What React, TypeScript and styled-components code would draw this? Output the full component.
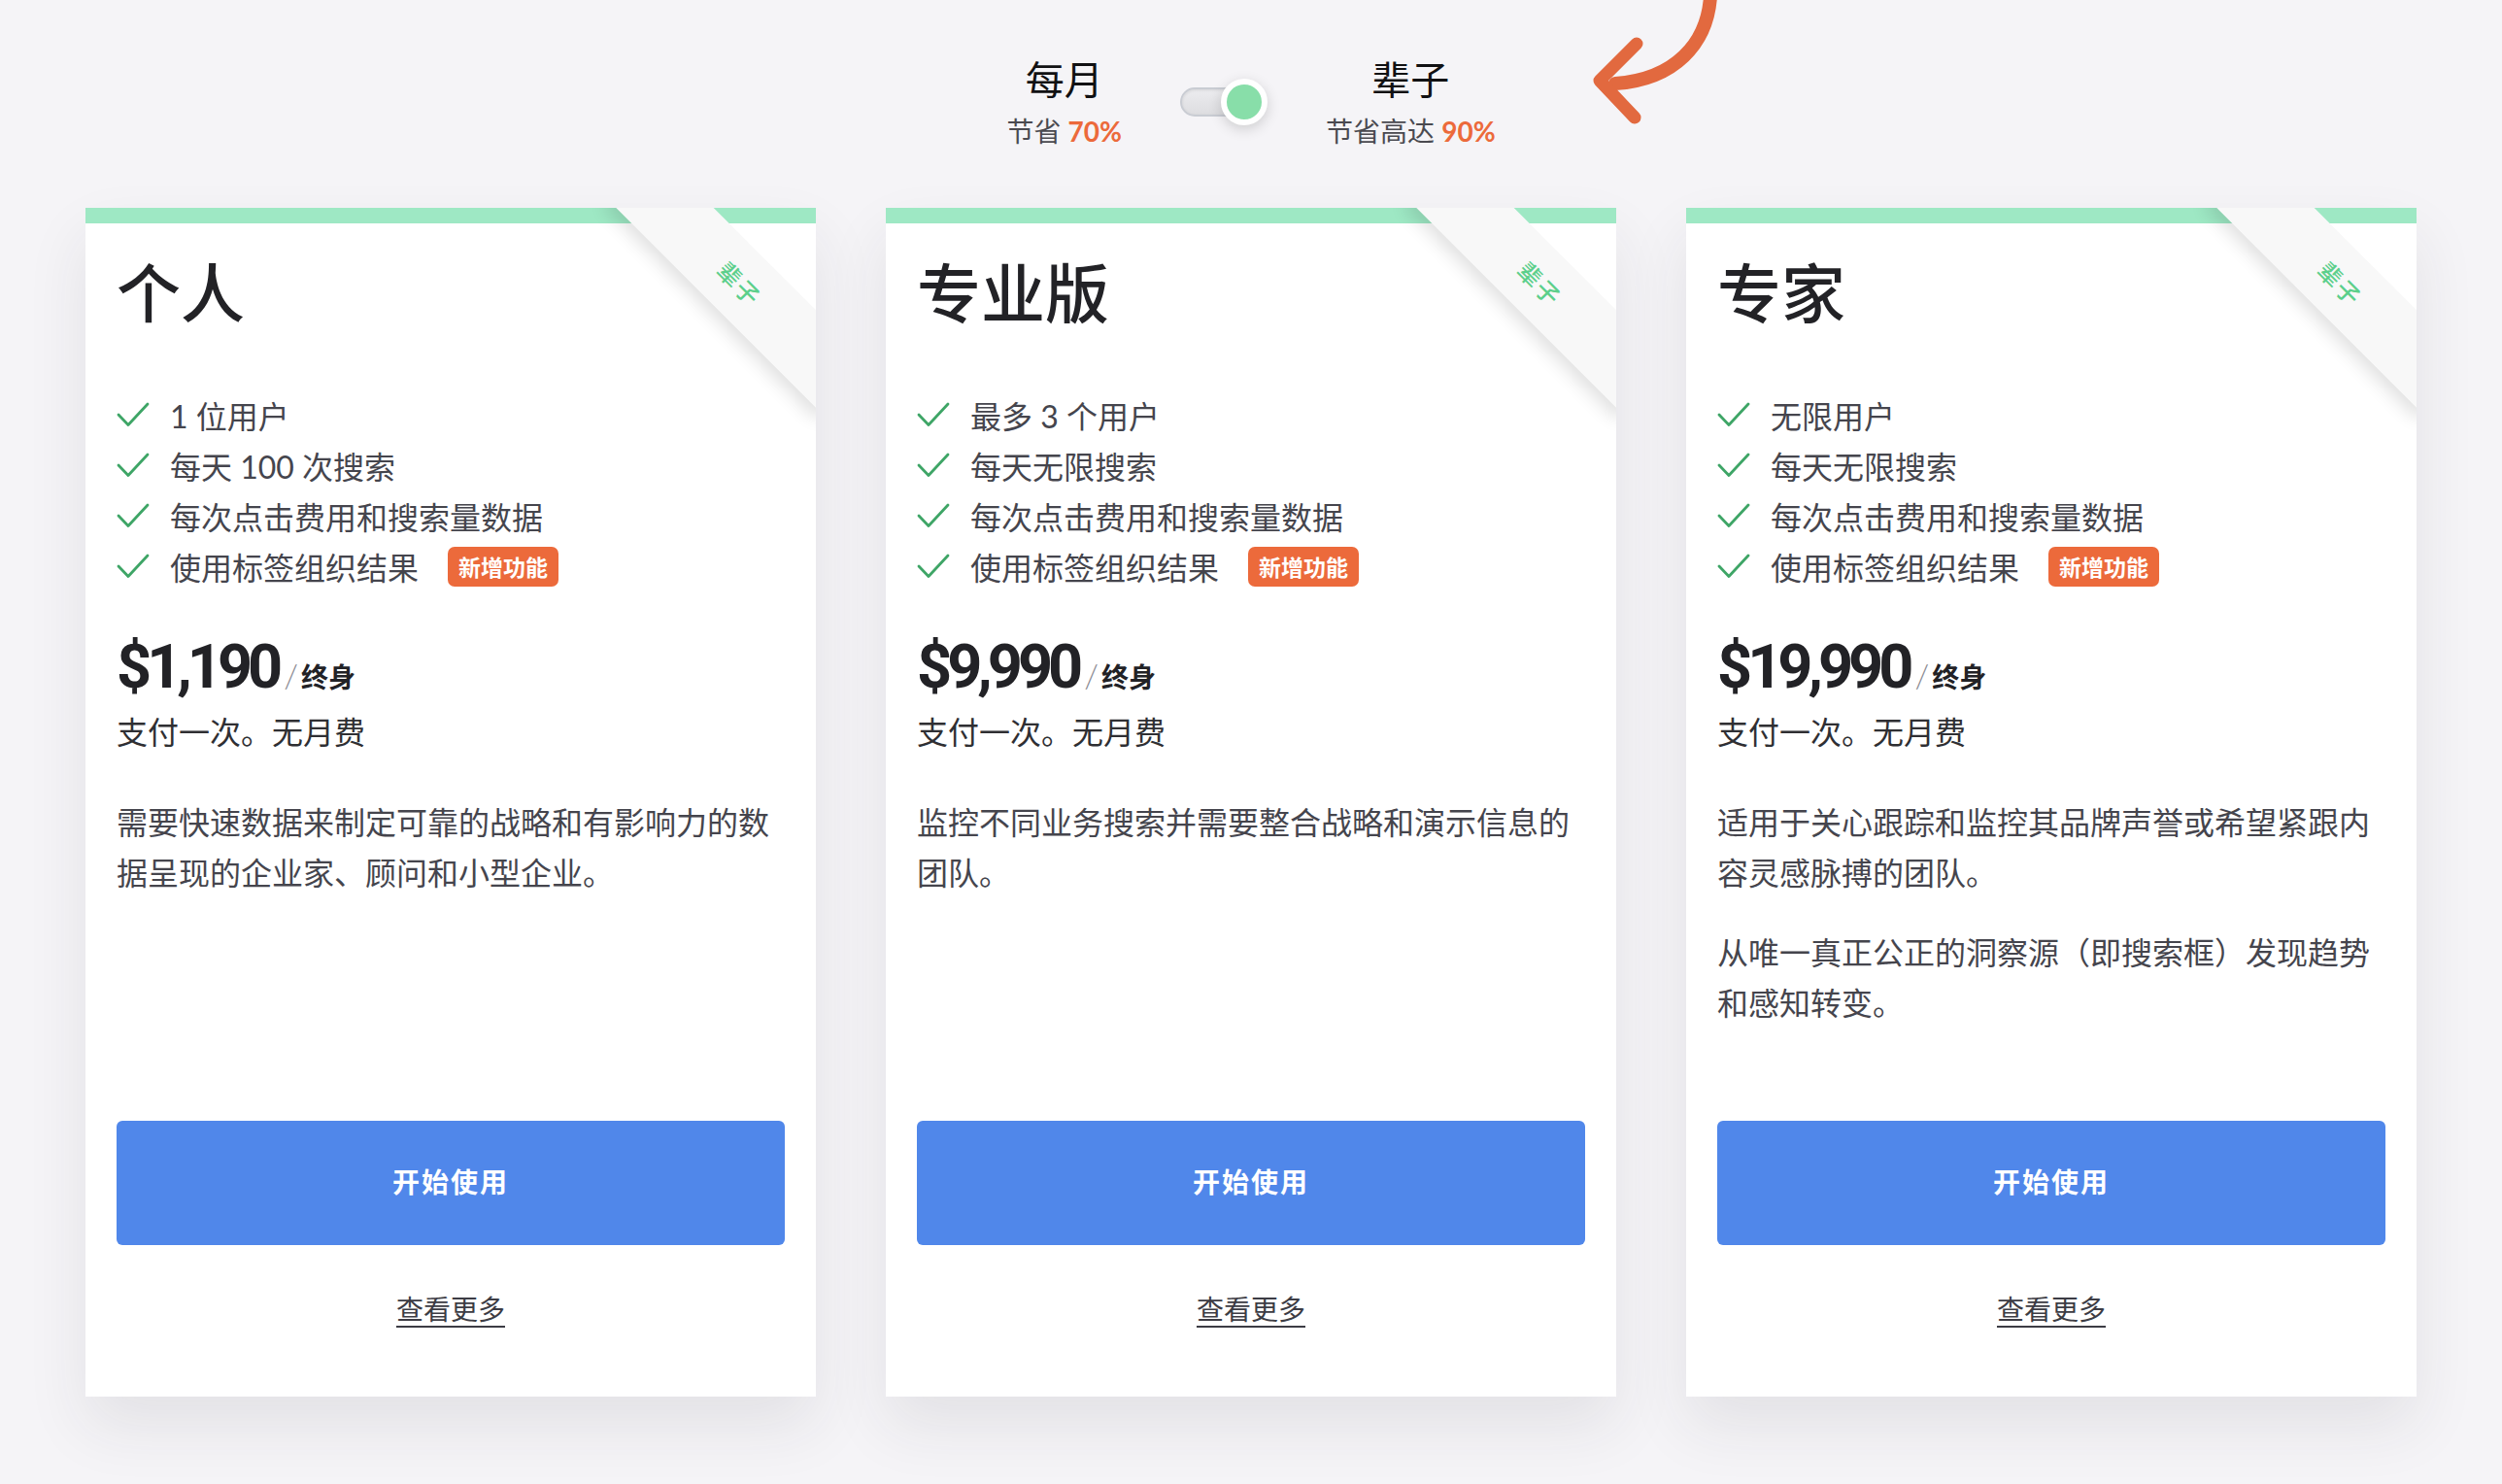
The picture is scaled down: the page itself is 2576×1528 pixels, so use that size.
import styled, { createGlobalStyle } from 'styled-components';

const GlobalStyle = createGlobalStyle`
  html, body {
    margin: 0;
    padding: 0;
    background: #f5f4f7;
  }
  body {
    font-family: Lato, 'Noto Sans CJK SC', sans-serif;
    color: #2a2a2e;
  }
  * {
    box-sizing: border-box;
  }
`;

const Page = styled.div`
  position: relative;
  min-height: 1528px;
  padding: 56px 0 90px;
`;

const Header = styled.div`
  display: flex;
  justify-content: center;
  align-items: center;
  gap: 60px;
`;

const PlanLabel = styled.div`
  display: flex;
  flex-direction: column;
  align-items: center;
`;

const LabelTitle = styled.div`
  font-size: 40px;
  line-height: 52px;
  font-weight: 400;
  color: #111113;
`;

const LabelSub = styled.div`
  margin-top: 9px;
  font-size: 28px;
  line-height: 36px;
  color: #4a4a50;
  b {
    color: #ec6a3b;
    font-weight: 700;
  }
`;

const Toggle = styled.div`
  position: relative;
  width: 90px;
  height: 48px;
  display: flex;
  align-items: center;
`;

const Track = styled.div`
  width: 78px;
  height: 30px;
  border-radius: 15px;
  background: linear-gradient(#ececef, #dddde0);
  border: 2px solid #c9ccd3;
  box-shadow: inset 0 1px 3px rgba(0, 0, 0, 0.1);
`;

const Knob = styled.div`
  position: absolute;
  right: 0;
  top: 0;
  width: 48px;
  height: 48px;
  border-radius: 50%;
  background: #88dea9;
  border: 6px solid #fff;
  box-shadow: 0 4px 14px rgba(0, 0, 0, 0.16);
`;

const Arrow = styled.svg`
  position: absolute;
  top: 0;
  left: calc(50% + 348px);
`;

const Cards = styled.div`
  display: grid;
  grid-template-columns: repeat(3, 752px);
  gap: 72px;
  justify-content: center;
  margin-top: 61px;
`;

const Card = styled.div`
  position: relative;
  overflow: hidden;
  min-height: 1224px;
  padding: 48px 32px 70px;
  display: flex;
  flex-direction: column;
  background: linear-gradient(to bottom, #9ee8c4 16px, #fff 16px);
  box-shadow: 0 30px 60px rgba(40, 40, 60, 0.09);
`;

const Ribbon = styled.div`
  position: absolute;
  left: 514px;
  top: 42px;
  width: 320px;
  height: 71px;
  transform: rotate(45deg);
  display: flex;
  align-items: center;
  justify-content: center;
  background: #f8f8f8;
  box-shadow: 0 12px 18px -4px rgba(0, 0, 0, 0.12);
  color: #5ccf8b;
  font-size: 24px;
  font-weight: 500;
  letter-spacing: 2px;
`;

const Title = styled.h2`
  margin: 0;
  font-size: 66px;
  line-height: 79px;
  font-weight: 500;
  color: #222226;
`;

const Features = styled.ul`
  list-style: none;
  margin: 60px 0 0;
  padding: 0;
`;

const Feature = styled.li`
  display: flex;
  align-items: center;
  height: 52px;
  font-size: 32px;
  color: #45454d;
  svg {
    flex: none;
    margin-right: 21px;
  }
`;

const Badge = styled.span`
  margin-left: 30px;
  height: 41px;
  padding: 0 11px;
  display: inline-flex;
  align-items: center;
  border-radius: 7px;
  background: #ec6a3b;
  color: #fff;
  font-size: 23px;
  font-weight: 700;
`;

const PriceRow = styled.div`
  margin-top: 42px;
  display: flex;
  align-items: baseline;
  height: 72px;
  line-height: 72px;
`;

const Amount = styled.span`
  font-family: Roboto, sans-serif;
  font-size: 63px;
  font-weight: 700;
  letter-spacing: -5px;
  color: #222226;
`;

const Per = styled.span`
  margin-left: 6px;
  font-size: 28px;
  font-weight: 700;
  color: #222226;
  i {
    font-style: normal;
    font-weight: 300;
    font-size: 34px;
    color: #8a8a92;
    margin-right: 3px;
  }
`;

const OneTime = styled.div`
  margin-top: 5px;
  font-size: 32px;
  line-height: 52px;
  color: #2f2f33;
`;

const Description = styled.div`
  margin-top: 41px;
  font-size: 32px;
  line-height: 52px;
  color: #45454d;
  p {
    margin: 0;
  }
  p + p {
    margin-top: 30px;
  }
`;

const StartButton = styled.button`
  margin-top: auto;
  height: 128px;
  width: 100%;
  padding: 0 0 4px;
  border: none;
  border-radius: 6px;
  background: #5087ea;
  color: #fff;
  font-family: inherit;
  font-size: 28px;
  font-weight: 700;
  letter-spacing: 2px;
`;

const MoreLink = styled.a`
  margin-top: 46px;
  align-self: center;
  font-size: 28px;
  line-height: 40px;
  color: #3c3c44;
  text-decoration: underline;
  text-decoration-thickness: 2px;
  text-underline-offset: 6px;
`;

type Plan = {
  name: string;
  features: string[];
  price: string;
  description: string[];
};

const plans: Plan[] = [
  {
    name: '个人',
    features: ['1 位用户', '每天 100 次搜索', '每次点击费用和搜索量数据'],
    price: '$1,190',
    description: ['需要快速数据来制定可靠的战略和有影响力的数据呈现的企业家、顾问和小型企业。'],
  },
  {
    name: '专业版',
    features: ['最多 3 个用户', '每天无限搜索', '每次点击费用和搜索量数据'],
    price: '$9,990',
    description: ['监控不同业务搜索并需要整合战略和演示信息的团队。'],
  },
  {
    name: '专家',
    features: ['无限用户', '每天无限搜索', '每次点击费用和搜索量数据'],
    price: '$19,990',
    description: [
      '适用于关心跟踪和监控其品牌声誉或希望紧跟内容灵感脉搏的团队。',
      '从唯一真正公正的洞察源（即搜索框）发现趋势和感知转变。',
    ],
  },
];

function Check() {
  return (
    <svg width="34" height="26" viewBox="0 0 34 26">
      <polyline
        points="2,13 12,23.5 32,2"
        fill="none"
        stroke="#3ea566"
        strokeWidth="2.8"
        strokeLinecap="round"
        strokeLinejoin="round"
      />
    </svg>
  );
}

function PlanCard({ plan }: { plan: Plan }) {
  return (
    <Card>
      <Ribbon>辈子</Ribbon>
      <Title>{plan.name}</Title>
      <Features>
        {plan.features.map((f) => (
          <Feature key={f}>
            <Check />
            {f}
          </Feature>
        ))}
        <Feature>
          <Check />
          使用标签组织结果
          <Badge>新增功能</Badge>
        </Feature>
      </Features>
      <PriceRow>
        <Amount>{plan.price}</Amount>
        <Per>
          <i>/</i>终身
        </Per>
      </PriceRow>
      <OneTime>支付一次。无月费</OneTime>
      <Description>
        {plan.description.map((d) => (
          <p key={d}>{d}</p>
        ))}
      </Description>
      <StartButton>开始使用</StartButton>
      <MoreLink>查看更多</MoreLink>
    </Card>
  );
}

export default function App() {
  return (
    <>
      <GlobalStyle />
      <Page>
        <Arrow width="140" height="130" viewBox="0 0 140 130">
          <path
            d="M125 -4 C 122 45, 88 82, 27 86"
            fill="none"
            stroke="#e2693f"
            strokeWidth="14"
            strokeLinecap="round"
          />
          <polyline
            points="49,45 11,83 47,121"
            fill="none"
            stroke="#e2693f"
            strokeWidth="13"
            strokeLinecap="round"
            strokeLinejoin="round"
          />
        </Arrow>
        <Header>
          <PlanLabel>
            <LabelTitle>每月</LabelTitle>
            <LabelSub>
              节省 <b>70%</b>
            </LabelSub>
          </PlanLabel>
          <Toggle>
            <Track />
            <Knob />
          </Toggle>
          <PlanLabel>
            <LabelTitle>辈子</LabelTitle>
            <LabelSub>
              节省高达 <b>90%</b>
            </LabelSub>
          </PlanLabel>
        </Header>
        <Cards>
          {plans.map((p) => (
            <PlanCard key={p.name} plan={p} />
          ))}
        </Cards>
      </Page>
    </>
  );
}
